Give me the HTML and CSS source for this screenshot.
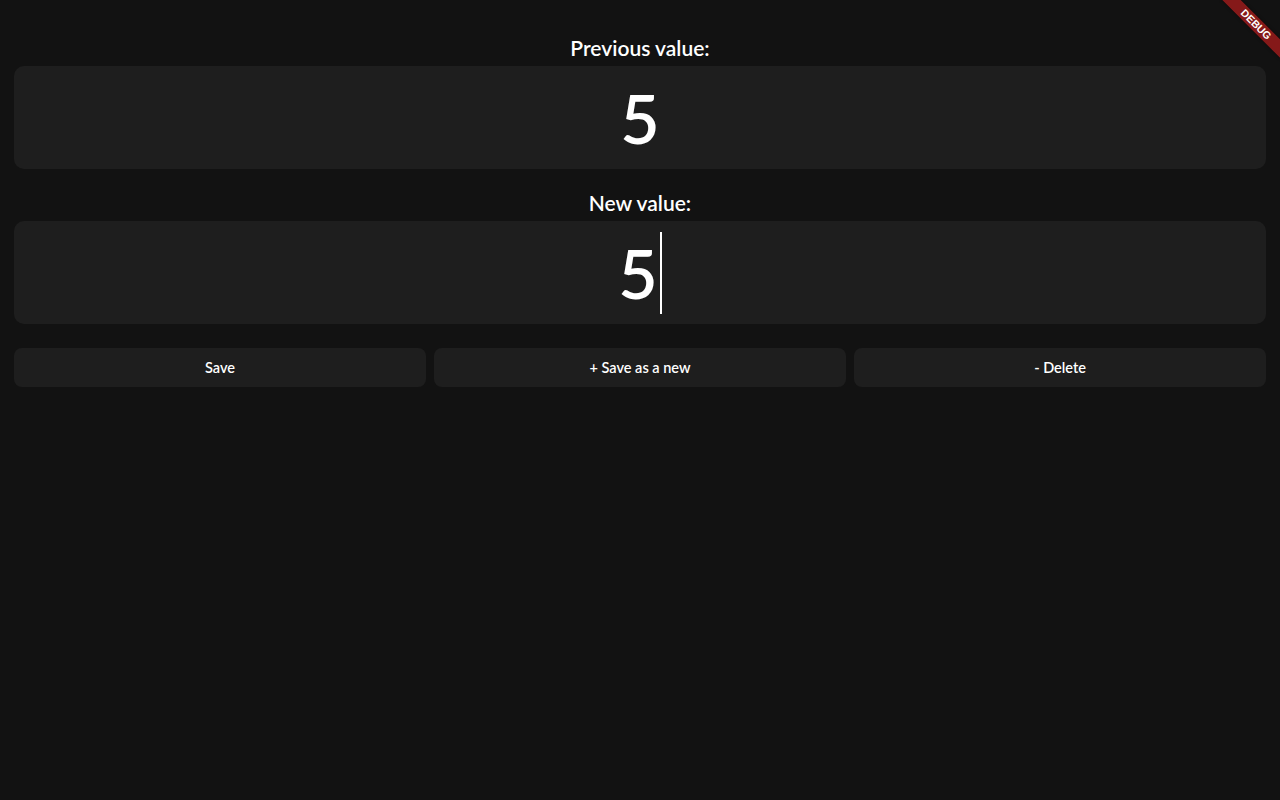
FILE: index.html
```html
<!DOCTYPE html>
<html>
<head>
<meta charset="utf-8">
<link rel="stylesheet" href="styles.css">
</head>
<body>
<main class="page">
  <div class="label">Previous value:</div>
  <div class="box"><span class="digit">5</span></div>
  <div class="label label-second">New value:</div>
  <div class="box"><span class="digit">5</span><span class="cursor"></span></div>
  <div class="buttons">
    <button class="btn">Save</button>
    <button class="btn">+ Save as a new</button>
    <button class="btn">- Delete</button>
  </div>
</main>
<div class="banner">DEBUG</div>
</body>
</html>
```
FILE: styles.css
```css
html, body {
  margin: 0;
  padding: 0;
  background: #121212;
  overflow: hidden;
  width: 1280px;
  height: 800px;
  font-family: "Lato", "Open Sans", sans-serif;
  color: #ffffff;
}
.page {
  padding: 33px 14px 0 14px;
  display: flex;
  flex-direction: column;
}
.label {
  height: 30px;
  line-height: 30px;
  text-align: center;
  font-size: 21px;
  font-weight: 600;
  margin-bottom: 3px;
}
.label-second {
  margin-top: 19px;
}
.box {
  height: 103px;
  background: #1e1e1e;
  border-radius: 10px;
  display: flex;
  align-items: center;
  justify-content: center;
}
.digit {
  font-size: 68px;
  line-height: 1;
  font-weight: 600;
}
.cursor {
  width: 2px;
  height: 82px;
  background: #ffffff;
  margin-left: 2px;
}
.buttons {
  margin-top: 24px;
  display: grid;
  grid-template-columns: 1fr 1fr 1fr;
  gap: 8px;
}
.btn {
  height: 39px;
  border: none;
  border-radius: 8px;
  background: #1e1e1e;
  color: #ffffff;
  font-family: "Lato", "Open Sans", sans-serif;
  font-size: 14.5px;
  font-weight: 600;
  padding: 0 0 0 0;
}
.banner {
  position: absolute;
  left: 1214px;
  top: 18px;
  width: 84px;
  height: 13px;
  line-height: 13px;
  transform: rotate(45deg);
  background: rgba(183, 28, 28, 0.7);
  color: #ffffff;
  font-family: "Liberation Sans", sans-serif;
  font-size: 10.5px;
  font-weight: 900;
  text-align: center;
  box-shadow: 0 0 3px rgba(0,0,0,0.5);
}
```
